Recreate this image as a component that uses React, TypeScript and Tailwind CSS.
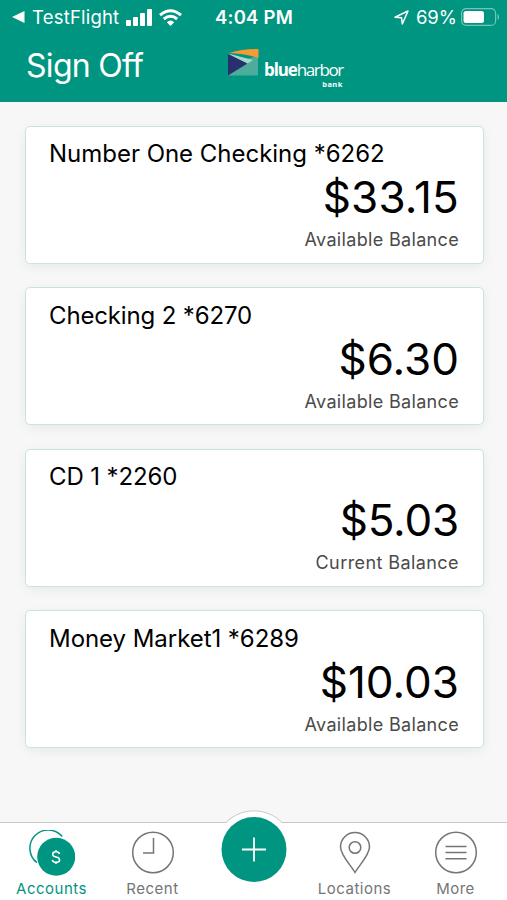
import React from "react";

interface Account {
  name: string;
  amount: string;
  label: string;
  nameClass: string;
  amountClass: string;
  labelClass: string;
}

const accounts: Account[] = [
  {
    name: "Number One Checking *6262",
    amount: "$33.15",
    label: "Available Balance",
    nameClass: "tracking-[-0.02px]",
    amountClass: "tracking-[0.2px]",
    labelClass: "tracking-[0.33px]",
  },
  {
    name: "Checking 2 *6270",
    amount: "$6.30",
    label: "Available Balance",
    nameClass: "tracking-[-0.15px]",
    amountClass: "tracking-[0px]",
    labelClass: "tracking-[0.33px]",
  },
  {
    name: "CD 1 *2260",
    amount: "$5.03",
    label: "Current Balance",
    nameClass: "tracking-[-0.12px]",
    amountClass: "tracking-[-0.2px]",
    labelClass: "tracking-[0.42px]",
  },
  {
    name: "Money Market1 *6289",
    amount: "$10.03",
    label: "Available Balance",
    nameClass: "tracking-[-0.05px]",
    amountClass: "tracking-[0px]",
    labelClass: "tracking-[0.33px]",
  },
];

const StatusBar: React.FC = () => (
  <div className="grid grid-cols-[1fr_88px_1fr] items-center h-[34px] pl-3 pr-[9px] text-white">
    <div className="flex items-center">
      <svg className="shrink-0" width="13" height="12" viewBox="0 0 13 12" fill="currentColor">
        <path d="M0 6 12.500 0v12z" />
      </svg>
      <span className="ml-[7px] text-[18.5px] leading-none tracking-[0.2px] whitespace-nowrap">
        TestFlight
      </span>
      <svg
        className="ml-[7px] shrink-0"
        width="27"
        height="17"
        viewBox="0 0 27 17"
        fill="currentColor"
      >
        <rect x="0" y="11" width="5" height="6" rx="1" />
        <rect x="7" y="8" width="5" height="9" rx="1" />
        <rect x="14" y="4" width="5" height="13" rx="1" />
        <rect x="21" y="0" width="5" height="17" rx="1" />
      </svg>
      <svg
        className="ml-[6px] shrink-0"
        width="23"
        height="17"
        viewBox="0 0 23 17"
        fill="none"
        stroke="currentColor"
        strokeWidth="3"
      >
        <path d="M1 6.200Q11.500-2.800 22 6.200" />
        <path d="M4.800 10Q11.500 4.400 18.200 10" />
        <path d="M11.500 17 7.800 13.200Q11.500 10 15.200 13.200Z" fill="currentColor" stroke="none" />
      </svg>
    </div>
    <p className="-ml-[2px] text-center text-[18.5px] leading-none font-semibold tracking-[0.2px] whitespace-nowrap">
      4:04 PM
    </p>
    <div className="flex items-center justify-end">
      <svg
        width="15"
        height="15"
        viewBox="0 0 15 15"
        fill="none"
        stroke="currentColor"
        strokeWidth="1.500"
        strokeLinejoin="round"
      >
        <path d="M1 7.200 14 1 8.300 14 7.500 7.700z" />
      </svg>
      <span className="ml-[7px] text-[18.5px] leading-none">69%</span>
      <svg className="ml-1 -mr-[2px] shrink-0" width="39" height="18" viewBox="0 0 39 18">
        <rect
          x="0.600"
          y="0.600"
          width="34"
          height="16.800"
          rx="4.500"
          fill="none"
          stroke="#fff"
          strokeOpacity="0.45"
          strokeWidth="1.200"
        />
        <rect x="2.500" y="3" width="20.500" height="12" rx="2.500" fill="#fff" />
        <path d="M36.500 6v6c2-1 2-5 0-6z" fill="#fff" fillOpacity="0.45" />
      </svg>
    </div>
  </div>
);

const Logo: React.FC = () => (
  <div className="flex items-start">
    <svg width="31" height="27" viewBox="0 0 31 27">
      <path d="M0 5 19 10 30 7V26.500H0z" fill="#4dac9b" />
      <path d="M0 4.500 25 11 19 15z" fill="#a5d9c9" />
      <path d="M0 5 19.500 14.500 0 26.500z" fill="#28306f" />
      <path d="M1 4C10 1 20 0 30.500 0V9C21 5.500 11 4.800 1 4z" fill="#f79a33" />
    </svg>
    <div className="ml-[5px] mt-[11px] font-['Open_Sans',sans-serif] text-white text-right">
      <p className="text-[17px] leading-[20px] whitespace-nowrap">
        <span className="font-bold tracking-[-1.1px]">blue</span>
        <span className="tracking-[-1.4px]">harbor</span>
      </p>
      <p className="text-[7.5px] leading-[8px] font-bold tracking-[0.4px]">bank</p>
    </div>
  </div>
);

const AccountCard: React.FC<{ account: Account }> = ({ account }) => (
  <div className="h-[138px] pt-[12.400px] px-[23.500px] bg-white border border-[#c5e6dd] rounded-[5px] shadow-[0_3px_12px_rgba(0,0,0,0.06)]">
    <h2 className={`text-[24px] leading-[29px] ${account.nameClass}`}>
      {account.name}
    </h2>
    <div className="text-right">
      <p className={`text-[44px] leading-[58px] ${account.amountClass}`}>
        {account.amount}
      </p>
      <p className={`text-[18px] leading-[28px] text-[#4a4a4a] ${account.labelClass}`}>
        {account.label}
      </p>
    </div>
  </div>
);

const AccountsIcon = () => (
  <svg width="46" height="46" viewBox="0 0 46 46" fill="none">
    <path d="M8 32.700A18.250 18.250 0 1 1 33.200 6.600" stroke="#009580" strokeWidth="1.500" />
    <circle cx="27.200" cy="26.700" r="19" fill="#009580" />
    <path
      d="M30.500 24Q30 21.800 27 21.800Q23.700 21.800 23.700 24.200Q23.700 26.300 27 26.900Q30.600 27.600 30.600 29.900Q30.600 32.300 27 32.300Q23.700 32.300 23.300 29.800M27 20V22M27 32V34"
      stroke="#fff"
      strokeWidth="1.500"
    />
  </svg>
);

const RecentIcon = () => (
  <svg width="46" height="46" viewBox="0 0 46 46" fill="none" stroke="#757575" strokeWidth="1.500">
    <circle cx="23" cy="22.500" r="20.300" />
    <path d="M23.500 8V23H13" />
  </svg>
);

const LocationIcon = () => (
  <svg width="46" height="46" viewBox="0 0 46 46" fill="none" stroke="#757575" strokeWidth="1.500">
    <path d="M23 42.500C19 35.500 8.500 25 8.500 17A14.500 14.500 0 0 1 37.500 17C37.500 25 27 35.500 23 42.500z" />
    <circle cx="23" cy="17.500" r="5.800" />
  </svg>
);

const MoreIcon = () => (
  <svg width="46" height="46" viewBox="0 0 46 46" fill="none" stroke="#757575" strokeWidth="1.500">
    <circle cx="23" cy="22.500" r="20.300" />
    <path d="M12.500 16.500H33.500M12.500 22.500H33.500M12.500 28.800H33.500" />
  </svg>
);

const NavItem: React.FC<{
  label: string;
  active?: boolean;
  icon: React.ReactNode;
}> = ({ label, active, icon }) => (
  <button
    className={`flex flex-col items-center pt-[7px] text-[15px] leading-[25px] tracking-[0.5px] ${
      active ? "text-[#009580]" : "text-[#757575]"
    }`}
  >
    {icon}
    <span>{label}</span>
  </button>
);

const App: React.FC = () => {
  return (
    <div className="flex flex-col w-[507px] h-[900px] overflow-hidden bg-[#f7f7f7] font-['Inter',sans-serif] text-black">
      <header className="h-[102px] bg-[#009580] shrink-0">
        <StatusBar />
        <div className="flex items-start pl-[26px]">
          <h1 className="w-[202px] pt-[13px] text-[32px] leading-[38px] text-white tracking-[-0.7px]">
            Sign Off
          </h1>
          <div className="pt-[15px]">
            <Logo />
          </div>
        </div>
      </header>

      <main className="flex flex-col flex-1 gap-[23.400px] pt-6 pl-[24.500px] pr-[23.500px]">
        {accounts.map((account) => (
          <AccountCard key={account.name} account={account} />
        ))}
      </main>

      <nav className="relative grid grid-cols-5 h-[78px] px-[1px] bg-white border-t border-[#c9c9c9] shrink-0">
        <NavItem label="Accounts" active icon={<AccountsIcon />} />
        <NavItem label="Recent" icon={<RecentIcon />} />
        {/* Raised add button */}
        <button className="absolute left-[214px] top-[-13px]">
          <svg width="80" height="80" viewBox="0 0 80 80">
            <path d="M12.500 12.500C27-3 53-3 67.500 12.500V20H12.500z" fill="#fff" />
            <path d="M12 12.500C27-3 53-3 68 12.500" fill="none" stroke="#c9c9c9" />
            <circle cx="40" cy="39.500" r="32.500" fill="#009580" />
            <path d="M28 39.500H52M40 27.500V51.500" stroke="#fff" strokeWidth="1.800" />
          </svg>
        </button>
        <span />
        <NavItem label="Locations" icon={<LocationIcon />} />
        <NavItem label="More" icon={<MoreIcon />} />
      </nav>
    </div>
  );
};

export default App;
